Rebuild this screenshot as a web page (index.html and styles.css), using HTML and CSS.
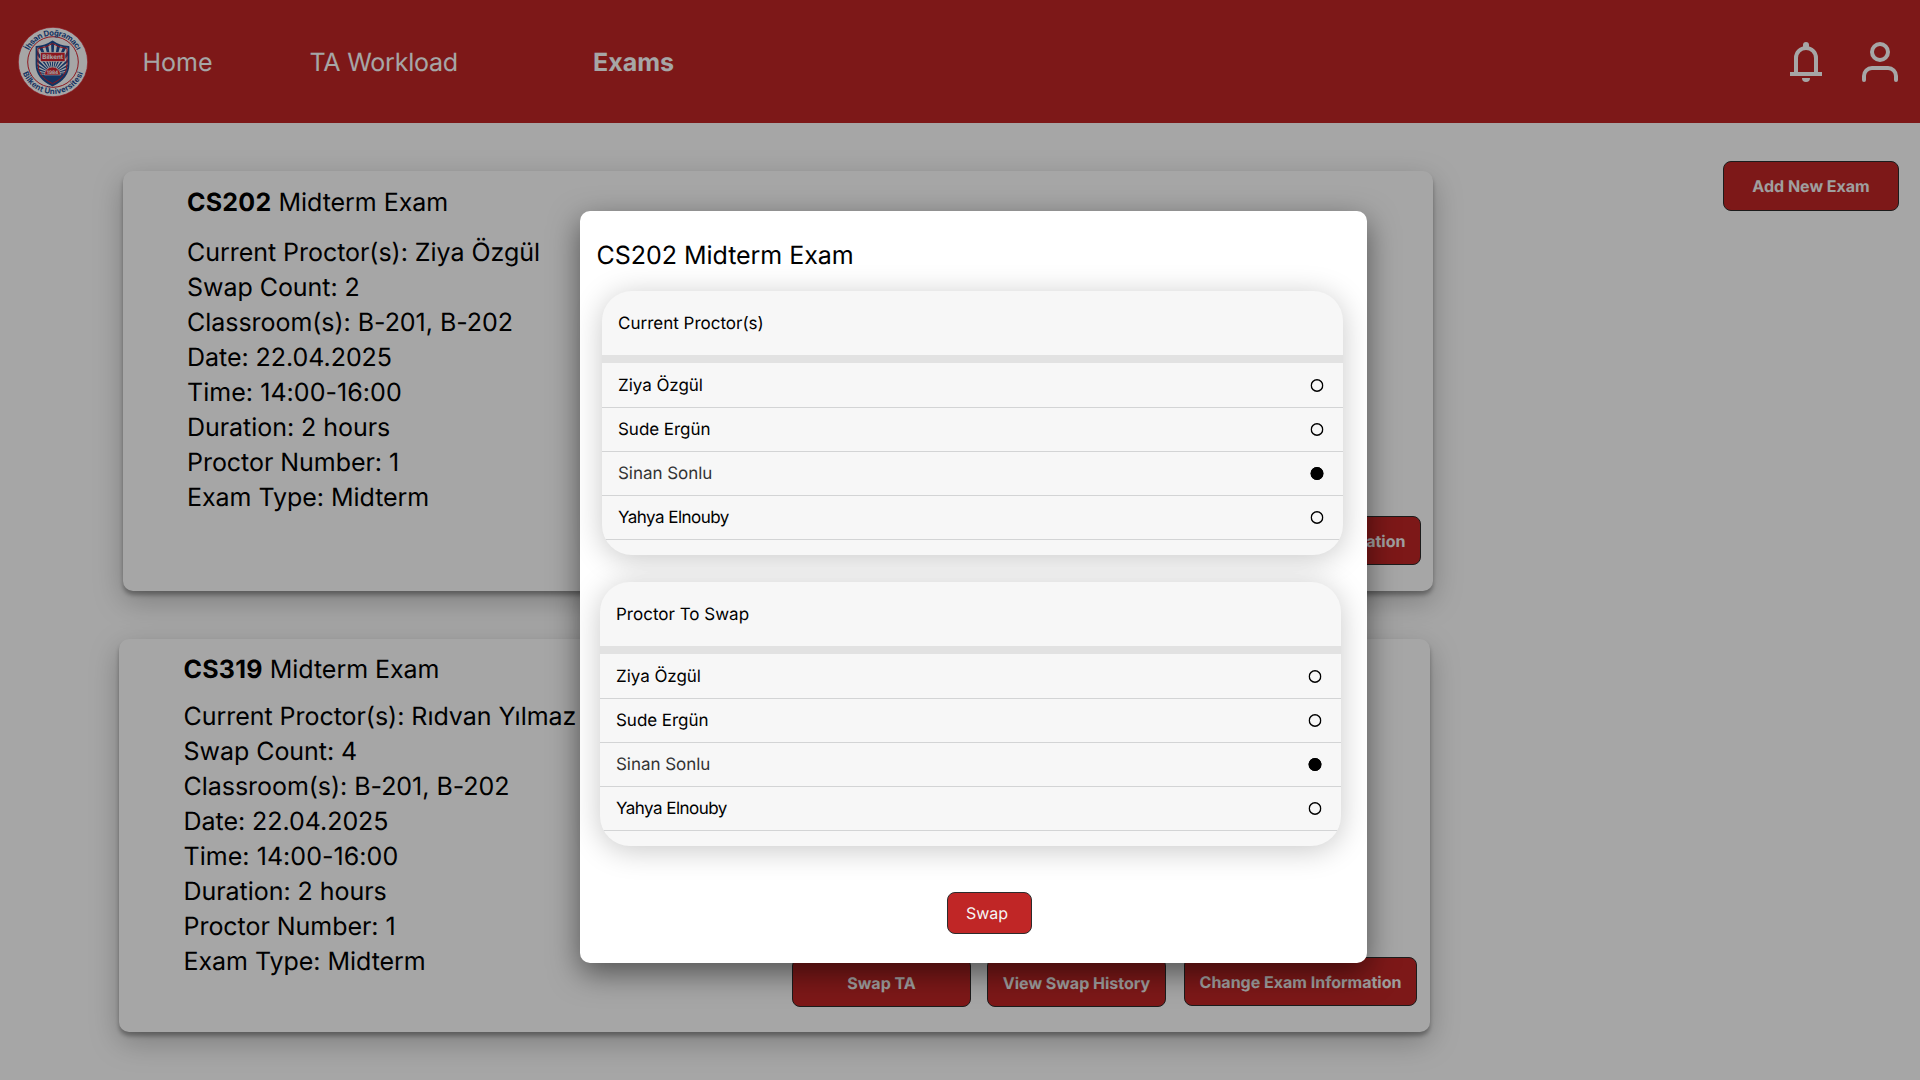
FILE: index.html
```html
<!DOCTYPE html>
<html lang="en">
<head>
<meta charset="utf-8">
<title>Exams</title>
<link rel="stylesheet" href="styles.css">
</head>
<body>
<header class="topbar">
  <svg class="logo" viewBox="0 0 72 72" width="72" height="72" role="img" aria-label="İhsan Doğramacı Bilkent Üniversitesi">
    <defs>
      <path id="arc-top" d="M9.500 36a26.500 26.500 0 0 1 53 0"/>
      <path id="arc-bottom" d="M4 36a32 32 0 0 0 64 0"/>
      <clipPath id="shield"><path d="M35.500 15.500q7 5 16 5.500v17q0 14-16 21.500q-16-7.500-16-21.500v-17q9-.5 16-5.500z"/></clipPath>
    </defs>
    <circle cx="36" cy="36" r="34.700" fill="#fff" stroke="#d8232f" stroke-width=".7"/>
    <circle cx="36" cy="36" r="25.300" fill="#fff" stroke="#d8232f" stroke-width="1"/>
    <g clip-path="url(#shield)">
      <path fill="#fff" d="M18 14h36v48H18z"/>
      <circle cx="35.500" cy="48" r="19" fill="none" stroke="#1f4f96" stroke-width="36" stroke-dasharray="2.100 1.900"/>
      <path fill="#1f4f96" d="M18 49h36v14H18z"/>
      <path fill="#d8232f" stroke="#fff" stroke-width=".6" d="M27.500 49a8 8 0 0 1 16 0z"/>
    </g>
    <path fill="none" stroke="#1f4f96" stroke-width="1.800" d="M35.500 15.500q7 5 16 5.500v17q0 14-16 21.500q-16-7.500-16-21.500v-17q9-.5 16-5.500z"/>
    <path fill="none" stroke="#d8232f" stroke-width="1" d="M35.500 17.500q6.500 4.300 14.500 5v15.500q0 13-14.500 19.700q-14.500-6.700-14.500-19.700v-15.500q8-.7 14.500-5z"/>
    <rect x="23.500" y="26.400" width="24.500" height="9" fill="#d8232f" stroke="#fff" stroke-width=".6"/>
    <text class="logo-name" x="35.700" y="33.300" text-anchor="middle">Bilkent</text>
    <text class="logo-year" x="35.600" y="47.800" text-anchor="middle">1984</text>
    <text class="logo-ring"><textPath href="#arc-top" startOffset="50%" text-anchor="middle" textLength="59">İhsan Doğramacı</textPath></text>
    <text class="logo-ring"><textPath href="#arc-bottom" startOffset="50%" text-anchor="middle" textLength="78">Bilkent Üniversitesi</textPath></text>
  </svg>
  <nav class="nav">
    <a class="nav-home">Home</a>
    <a class="nav-workload">TA Workload</a>
    <a class="nav-exams">Exams</a>
  </nav>
  <div class="tools">
    <svg width="32" height="40" viewBox="0 0 32 40" aria-label="Notifications">
      <path d="M6 32V16a10 10 0 0 1 20 0v16" fill="none" stroke="#fff" stroke-width="4"/>
      <rect y="30" width="32" height="4" fill="#fff"/>
      <rect x="13" width="6" height="7" rx="3" fill="#fff"/>
      <path d="M12 36h8a4 4 0 0 1-8 0z" fill="#fff"/>
    </svg>
    <svg width="36" height="40" viewBox="0 0 36 40" fill="none" stroke="#fff" stroke-width="4" stroke-linecap="round" aria-label="Profile">
      <circle cx="18" cy="10" r="8"/>
      <path d="M2 38v-4a8 8 0 0 1 8-8h16a8 8 0 0 1 8 8v4"/>
    </svg>
  </div>
</header>

<main class="page">
  <div class="exams">
    <section class="card card-first">
      <h2><b>CS202</b> Midterm Exam</h2>
      <ul class="details">
        <li>Current Proctor(s): Ziya Özgül</li>
        <li>Swap Count: 2</li>
        <li>Classroom(s): B-201, B-202</li>
        <li>Date: 22.04.2025</li>
        <li class="time">Time: 14:00-16:00</li>
        <li>Duration: 2 hours</li>
        <li>Proctor Number: 1</li>
        <li>Exam Type: Midterm</li>
      </ul>
      <div class="actions">
        <button class="btn swap">Swap TA</button>
        <button class="btn history">View Swap History</button>
        <button class="btn change">Change Exam Information</button>
      </div>
    </section>
    <section class="card card-second">
      <h2><b>CS319</b> Midterm Exam</h2>
      <ul class="details">
        <li>Current Proctor(s): Rıdvan Yılmaz</li>
        <li>Swap Count: 4</li>
        <li>Classroom(s): B-201, B-202</li>
        <li>Date: 22.04.2025</li>
        <li class="time">Time: 14:00-16:00</li>
        <li>Duration: 2 hours</li>
        <li>Proctor Number: 1</li>
        <li>Exam Type: Midterm</li>
      </ul>
      <div class="actions">
        <button class="btn swap">Swap TA</button>
        <button class="btn history">View Swap History</button>
        <button class="btn change">Change Exam Information</button>
      </div>
    </section>
  </div>
  <button class="btn add">Add New Exam</button>
</main>

<div class="overlay">
  <div class="modal" role="dialog">
    <h1>CS202 Midterm Exam</h1>
    <section class="panel panel-current">
      <h3>Current Proctor(s)</h3>
      <ul>
        <li>Ziya Özgül<i class="radio"></i></li>
        <li>Sude Ergün<i class="radio"></i></li>
        <li class="selected">Sinan Sonlu<i class="radio on"></i></li>
        <li><span class="tight">Yahya Elnouby</span><i class="radio"></i></li>
      </ul>
    </section>
    <section class="panel panel-swap">
      <h3>Proctor To Swap</h3>
      <ul>
        <li>Ziya Özgül<i class="radio"></i></li>
        <li>Sude Ergün<i class="radio"></i></li>
        <li class="selected">Sinan Sonlu<i class="radio on"></i></li>
        <li><span class="tight">Yahya Elnouby</span><i class="radio"></i></li>
      </ul>
    </section>
    <button class="btn confirm">Swap</button>
  </div>
</div>
</body>
</html>
```
FILE: styles.css
```css
* { box-sizing: border-box; }

body {
  margin: 0;
  width: 1920px;
  height: 1080px;
  overflow: hidden;
  background: #fff;
  color: #000;
  font-family: "Inter", sans-serif;
  text-rendering: geometricPrecision;
}

h1, h2, h3, ul { margin: 0; padding: 0; font-weight: 400; list-style: none; }

/* Top bar */
.topbar {
  display: flex;
  align-items: center;
  height: 123px;
  padding: 0 22px 0 17px;
  background: #c02626;
  color: #fff;
}
.logo { flex: none; }
.logo text { font-family: "Inter", sans-serif; font-weight: 700; }
.logo-name { font-size: 6.2px; fill: #fff; }
.logo-year { font-size: 4.8px; fill: #fff; }
.logo-ring { font-size: 7.8px; fill: #1f4f96; }

.nav {
  display: flex;
  margin-left: 53.5px;
  padding-top: 4px;
  font-size: 25px;
  line-height: 35px;
}
.nav-home { width: 167px; }
.nav-workload { width: 283.5px; letter-spacing: -0.22px; }
.nav-exams { font-weight: 700; }

.tools { display: flex; gap: 40px; margin-left: auto; }

/* Exam cards */
.page {
  display: flex;
  justify-content: space-between;
  align-items: flex-start;
  padding: 38px 21px 0 119px;
}
.exams {
  display: flex;
  flex-direction: column;
  gap: 48px;
  padding-top: 10px;
}
.card {
  display: flex;
  flex-direction: column;
  padding: 15px 12px 26px 64px;
  border-radius: 10px;
  background: #fff;
  box-shadow: 0 4px 4px rgba(0, 0, 0, .3), 0 10px 30px rgba(0, 0, 0, .25);
  font-size: 25px;
  line-height: 35px;
  letter-spacing: -0.04px;
}
.card h2 { font-size: 25px; line-height: 35px; }
.card b { letter-spacing: .25px; }
.card-first { width: 1310px; height: 420px; margin-left: 4px; }
.card-second { width: 1311px; height: 393px; padding: 14px 13px 26px 64.5px; }
.card-first .details { margin-top: 15px; }
.card-second .details { margin-top: 12px; }
.details { height: 280px; }
.time { letter-spacing: .05px; }
.actions {
  display: flex;
  justify-content: flex-end;
  align-items: flex-start;
  height: 49px;
  margin-top: auto;
}
.card-second .actions { margin-top: -23px; }

.btn {
  display: flex;
  align-items: center;
  justify-content: center;
  flex: none;
  height: 49px;
  padding: 0;
  border: 1px solid #2c2c2c;
  border-radius: 8px;
  background: #c02626;
  color: #f5f5f5;
  font: 700 16px/22px "Inter", sans-serif;
  text-rendering: geometricPrecision;
  white-space: nowrap;
}
.swap, .history { width: 179px; margin-top: 1px; }
.history { margin: 1px 18px 0 16px; }
.change { width: 233px; }
.add { width: 176px; height: 50px; }

/* Swap dialog */
.overlay {
  position: absolute;
  inset: 0;
  padding: 211px 0 0 580px;
  background: rgba(0, 0, 0, .35);
}
.modal {
  display: flex;
  flex-direction: column;
  width: 787px;
  height: 752px;
  padding: 28px 24px 0 16px;
  border-radius: 10px;
  background: #fff;
  box-shadow: 0 10px 30px rgba(0, 0, 0, .5);
}
.modal h1 { padding-left: .6px; font-size: 25px; line-height: 35px; letter-spacing: -0.04px; }

.panel {
  width: 741px;
  height: 264px;
  border-radius: 30px;
  background: #f7f7f7;
  box-shadow: 0 4px 30px rgba(0, 0, 0, .22);
  overflow: hidden;
  flex: none;
  font-size: 17px;
  line-height: 22px;
}
.panel-current { margin: 17px 0 0 6px; }
.panel-swap { margin: 27px 0 0 4px; }
.panel h3 {
  display: flex;
  align-items: center;
  height: 72px;
  padding: 2px 0 0 16px;
  border-bottom: 8px solid #e2e2e2;
  font-size: 17px;
}
.panel ul { padding-top: 1px; letter-spacing: -0.04px; }
.panel li {
  display: flex;
  align-items: center;
  justify-content: space-between;
  height: 44px;
  padding: 0 20px 0 16px;
  border-bottom: 1px solid #d3d4d5;
}
.panel .selected { color: #333; }
.tight { letter-spacing: -0.54px; }
.radio {
  width: 13px;
  height: 13px;
  border-radius: 50%;
  box-shadow: inset 0 0 0 1.500px #000;
  transform: translateX(.5px);
}
.radio.on { background: #000; }

.confirm {
  justify-content: flex-start;
  width: 85px;
  height: 42px;
  margin: 46px 0 0 351px;
  padding-left: 18px;
  font-weight: 400;
}
```
